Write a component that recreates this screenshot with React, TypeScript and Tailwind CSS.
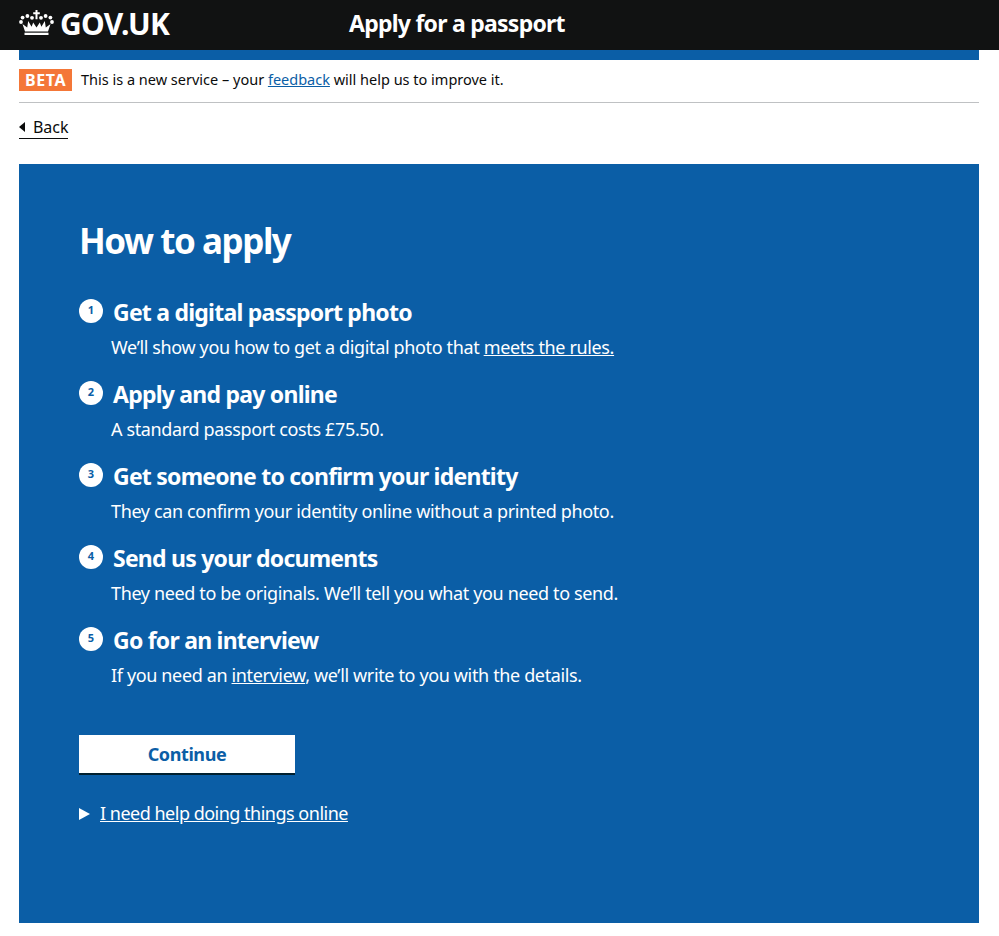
const font = { fontFamily: '"Noto Sans", sans-serif' };

const steps = [
  { title: "Get a digital passport photo", body: <>We’ll show you how to get a digital photo that <a href="#" className="underline">meets the rules.</a></> },
  { title: "Apply and pay online", body: <>A standard passport costs £75.50.</> },
  { title: "Get someone to confirm your identity", body: <>They can confirm your identity online without a printed photo.</> },
  { title: "Send us your documents", body: <>They need to be originals. We’ll tell you what you need to send.</> },
  { title: "Go for an interview", body: <>If you need an <a href="#" className="underline">interview</a>, we’ll write to you with the details.</> },
];

function Crown() {
  return (
    <svg width="35" height="25" viewBox="0 0 35 25" fill="#fff" className="shrink-0 mb-[5px]">
      <path d="M16.5 0h2v2.200h2.300v2h-2.300v5h-2v-5h-2.300v-2h2.300z" />
      <circle cx="2" cy="12" r="1.900" />
      <circle cx="3.600" cy="7.600" r="1.900" />
      <circle cx="8.400" cy="6" r="1.900" />
      <circle cx="13" cy="7.800" r="1.900" />
      <circle cx="22" cy="7.800" r="1.900" />
      <circle cx="26.600" cy="6" r="1.900" />
      <circle cx="31.400" cy="7.600" r="1.900" />
      <circle cx="33" cy="12" r="1.900" />
      <path d="M6 21.500 3.500 14l4.700 3.400 1-6.400 3.400 5.800 1.600-4.400 3.300 5 3.300-5 1.600 4.400 3.400-5.800 1 6.400 4.700-3.400L29 21.500z" />
      <path d="M5.500 22.700h24V25h-24z" />
    </svg>
  );
}

export default function App() {
  return (
    <div className="min-h-[936px] bg-white text-[#0b0c0c]" style={font}>
      <header className="h-[50px] bg-[#111212] flex items-center pl-[19px] text-white">
        <div className="w-[330px] flex items-center gap-[6px]">
          <Crown />
          <span className="text-[30px] font-bold leading-none tracking-[-0.75px] mb-[3px]">GOV.UK</span>
        </div>
        <span className="text-[23px] font-bold leading-none tracking-[-0.75px] mb-[3px]">Apply for a passport</span>
      </header>

      <div className="pl-[19px] pr-[20px]">
        <div className="h-[10px] bg-[#0b5ea6]" />

        {/* Phase banner */}
        <div className="h-[43px] border-b border-[#bfc1c3] flex items-center gap-[9px] pb-[3px]">
          <span className="bg-[#f47738] text-white font-bold text-[16px] leading-[22px] h-[22px] w-[53px] text-center tracking-[0.6px]">BETA</span>
          <span className="text-[14.5px] leading-[20px] mb-[1px]">
            This is a new service – your <a href="#" className="underline text-[#0b5ea6]">feedback</a> will help us to improve it.
          </span>
        </div>

        <div className="h-[61px] pt-[11px]">
          <a href="#" className="inline-flex items-center h-[22px] border-b border-[#0b0c0c] text-[16px] leading-[20px] tracking-[-0.05px]">
            <span className="w-0 h-0 border-y-[5px] border-y-transparent border-r-[6px] border-r-[#0b0c0c] mr-[8px]" />
            Back
          </a>
        </div>

        {/* Main panel */}
        <main className="h-[759px] bg-[#0b5ea6] text-white pl-[60px] pt-[54px]">
          <h1 className="text-[35px] font-bold leading-[46px] tracking-[-1.45px]">How to apply</h1>

          <ol className="mt-[30px] flex flex-col gap-[14px]">
            {steps.map((s, i) => (
              <li key={s.title} className="h-[68px]">
                <div className="flex items-center h-[36px]">
                  <span className="w-6 h-6 rounded-full bg-white text-[#0b5ea6] text-[11px] font-bold flex items-center justify-center mb-[3px]">{i + 1}</span>
                  <span className="ml-[10px] text-[23px] font-bold leading-[30px] tracking-[-0.77px]">{s.title}</span>
                </div>
                <p className="ml-[32px] mt-[5px] text-[18px] leading-[25px] tracking-[-0.36px]">{s.body}</p>
              </li>
            ))}
          </ol>

          <button className="mt-[45px] block w-[216px] h-10 bg-white border-b-2 border-[#00202f] text-[#0b5ea6] text-[18px] font-bold tracking-[-0.4px]">Continue</button>

          <div className="mt-[26px] flex items-center gap-[10px] text-[18px] leading-[25px] tracking-[-0.5px]">
            <span className="w-0 h-0 border-y-[6px] border-y-transparent border-l-[11px] border-l-white" />
            <a href="#" className="underline">I need help doing things online</a>
          </div>
        </main>
      </div>
    </div>
  );
}
